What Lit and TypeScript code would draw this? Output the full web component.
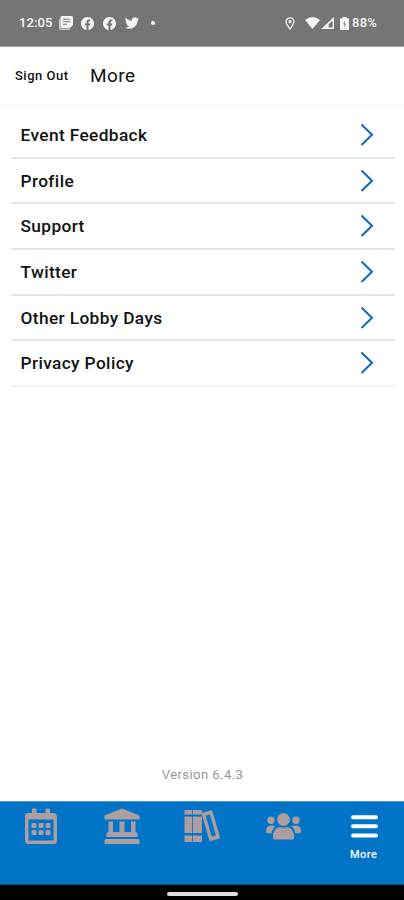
import { LitElement, html, css, svg } from "lit";
import { customElement } from "lit/decorators.js";

const chevron = html`<svg class="chevron" width="16" height="24" viewBox="0 0 16 24">
  <path d="M2.500 1.500 13 11.700 2.500 22" fill="none" stroke="currentColor" stroke-width="2" />
</svg>`;

const facebook = html`<svg width="13" height="13" viewBox="0 0 24 24">
  <path fill="currentColor" d="M24 12.07C24 5.4 18.63 0 12 0S0 5.4 0 12.07C0 18.1 4.39 23.1 10.13 24v-8.44H7.08v-3.49h3.05V9.41c0-3.02 1.79-4.69 4.53-4.69 1.31 0 2.68.24 2.68.24v2.97h-1.51c-1.49 0-1.95.93-1.95 1.88v2.26h3.32l-.53 3.49h-2.79V24C19.61 23.1 24 18.1 24 12.07z" />
</svg>`;

@customElement("status-bar")
class StatusBar extends LitElement {
  static styles = css`
    :host {
      display: flex;
      align-items: center;
      box-sizing: border-box;
      height: 47px;
      padding: 0 27px 0 19px;
      background: #757575;
      border-bottom: 1px solid #a5a5a5;
      color: #f5f5f5;
      font: 500 13px/16px Roboto, sans-serif;
    }
    svg { display: block; flex: none; }
    .time { width: 40px; letter-spacing: 0.1px; }
    .notes { display: flex; align-items: center; gap: 9px; }
    .notes svg:first-child { margin-right: -1px; }
    .dot { width: 4px; height: 4px; margin-left: 3px; border-radius: 50%; background: currentColor; }
    .system { display: flex; align-items: center; margin-left: auto; }
    .wifi { margin-left: 10px; }
    .signal { margin-left: 1px; }
    .battery { margin: 0 3px 0 6px; }
    .level { letter-spacing: 0.2px; }
  `;
  render() {
    return html`
      <span class="time">12:05</span>
      <div class="notes">
        <svg width="14" height="14" viewBox="0 0 14 14">
          <path fill="currentColor" opacity="0.65" d="M0 3h1.5v9.500H11V14H1.500A1.500 1.500 0 0 1 0 12.500z" />
          <path fill="currentColor" fill-rule="evenodd" d="M3 0h9.500a1.500 1.500 0 0 1 1.500 1.500V9l-3 3H3a1.500 1.500 0 0 1-1.500-1.500v-9A1.500 1.500 0 0 1 3 0zM4 2.700v1h7.500v-1zM4 5.200v1h7.500v-1zM4 7.700v1h4v-1z" />
        </svg>
        ${facebook} ${facebook}
        <svg width="14" height="12" viewBox="0 0 24 20">
          <path fill="currentColor" d="M23.950 2.570a10 10 0 0 1-2.820.770 4.960 4.960 0 0 0 2.160-2.720c-.950.550-2 .950-3.130 1.180a4.920 4.920 0 0 0-8.380 4.480C7.690 6.090 4.070 4.130 1.640 1.160a4.920 4.920 0 0 0 1.520 6.570 4.900 4.900 0 0 1-2.230-.620v.060a4.920 4.920 0 0 0 3.950 4.830 5 5 0 0 1-2.210.080 4.940 4.940 0 0 0 4.600 3.420A9.870 9.870 0 0 1 0 17.540a13.990 13.990 0 0 0 7.550 2.210c9.050 0 14-7.500 14-13.980l-.020-.630a9.940 9.940 0 0 0 2.420-2.570z" />
        </svg>
        <span class="dot"></span>
      </div>
      <div class="system">
        <svg width="10" height="13" viewBox="0 0 10 13">
          <path d="M5 12C3 9 1 7 1 4.800a4 4 0 0 1 8 0C9 7 7 9 5 12z" fill="none" stroke="currentColor" stroke-width="1.300" />
          <circle cx="5" cy="4.700" r="1.600" fill="currentColor" />
        </svg>
        <svg class="wifi" width="15" height="12" viewBox="0 0 15 12">
          <path fill="currentColor" d="M0 3Q7.500-2.800 15 3L7.500 12z" />
        </svg>
        <svg class="signal" width="13" height="12" viewBox="0 0 13 12">
          <path fill="currentColor" fill-rule="evenodd" d="M13 0v12H0zM11.600 3.500 7.700 7.200v3.400h3.900z" />
        </svg>
        <svg class="battery" width="9" height="13" viewBox="0 0 9 13">
          <path fill="currentColor" d="M2.500 0h4v1.200H8q1 0 1 1V12q0 1-1 1H1q-1 0-1-1V2.200q0-1 1-1h1.500z" />
          <path fill="#757575" d="M4.800 3.500 3.200 7.200h1.200V10.500l1.600-3.800H4.800z" />
        </svg>
        <span class="level">88%</span>
      </div>
    `;
  }
}

@customElement("tab-bar")
class TabBar extends LitElement {
  static styles = css`
    :host {
      display: grid;
      grid-template-columns: repeat(5, 1fr);
      box-sizing: border-box;
      height: 84px;
      padding: 6px 0 0 1px;
      background: #0274c8;
      border-top: 1px solid #4c9bd6;
      border-bottom: 1px solid #04508a;
      color: #ac9da0;
    }
    .tab { display: flex; flex-direction: column; align-items: center; }
    .active { color: #fff; font: 500 11px/14px Roboto, sans-serif; letter-spacing: 0.5px; }
    .active svg { margin-bottom: 3px; }
    svg { display: block; }
  `;
  render() {
    const cells = [0, 1, 2].flatMap((column) => [0, 1].map((row) => [6.500 + column * 7, 15 + row * 7]));
    return html`
      <div class="tab">
        <svg width="32" height="38" viewBox="0 0 32 38">
          <path fill="currentColor" fill-rule="evenodd" d="M7 1.500q0-1 1-1h2.500q1 0 1 1V5h9V1.500q0-1 1-1H24q1 0 1 1V5h3.500Q32 5 32 8.500v24Q32 36 28.500 36h-25Q0 36 0 32.500v-24Q0 5 3.500 5H7zM3.500 11.500v21h25v-21z" />
          ${cells.map(([x, y]) => svg`<rect x=${x} y=${y} width="5" height="5" rx="0.8" fill="currentColor" />`)}
        </svg>
      </div>
      <div class="tab">
        <svg width="36" height="38" viewBox="0 0 36 38">
          <path fill="currentColor" d="M18 0.500 35.500 7.500V11.500H.5V7.500zM4.500 13.500H9v10.500h6.500V13.500h5V24H27V13.500h4.500V24q2 0 2 2V29H2.500v-3q0-2 2-2zM.5 36v-3.500q0-1.500 1.500-1.500h32q1.500 0 1.500 1.500V36z" />
        </svg>
      </div>
      <div class="tab">
        <svg width="36" height="38" viewBox="0 0 36 38">
          <path fill="currentColor" d="M1.500 2h6.700v4.500H.5V3q0-1 1-1zM9 2h8q1 0 1 1v3.500H9zM.5 8.500h7.700V25H.5zM9 8.500h9V25H9zM.5 27.500h7.700V34H1.500q-1 0-1-1zM9 27.500h9V33q0 1-1 1H9z" />
          <g transform="translate(17.500 5) rotate(-16)">
            <path fill="currentColor" fill-rule="evenodd" d="M1 0h9q1 0 1 1v27.500q0 1-1 1H1q-1 0-1-1V1q0-1 1-1zM3.300 3.800v21.700h4.400V3.800z" />
          </g>
        </svg>
      </div>
      <div class="tab">
        <svg width="36" height="38" viewBox="0 0 36 38">
          <g fill="currentColor" transform="translate(.5 0)">
            <circle cx="18" cy="11.500" r="6.400" />
            <circle cx="5.500" cy="12.300" r="3.700" />
            <circle cx="30.500" cy="12.300" r="3.700" />
            <path d="M7.500 30q-.500-10 7-11 3.500 1.200 7 0 7.500 1 7 11-.500 1.500-1.500 1.500H9q-1 0-1.500-1.500zM.500 23.500q0-6 4.500-6 3 0 5 .800-3 2-3.800 7H2q-1.500 0-1.500-1.800zM35.500 23.500q0-6-4.500-6-3 0-5 .800 3 2 3.800 7H34q1.500 0 1.500-1.800z" />
          </g>
        </svg>
      </div>
      <div class="tab active">
        <svg width="28" height="37" viewBox="0 0 28 37">
          <path d="M3 9.200h23M3 18.300h23M3 27.500h23" stroke="currentColor" stroke-width="4" stroke-linecap="round" />
        </svg>
        More
      </div>
    `;
  }
}

@customElement("app-root")
class AppRoot extends LitElement {
  static styles = css`
    :host {
      display: flex;
      flex-direction: column;
      height: 900px;
      background: #fff;
      color: #111;
      font-family: Roboto, sans-serif;
    }
    header {
      display: flex;
      align-items: center;
      box-sizing: border-box;
      height: 58px;
      padding-left: 15px;
      border-bottom: 1px solid #fbfbfb;
    }
    .sign-out { width: 75px; font: 500 13px/20px Roboto, sans-serif; letter-spacing: 0.500px; }
    h1 { margin: 0; font: 400 19px/24px Roboto, sans-serif; letter-spacing: 0.400px; }
    .list { flex: 1; margin: 8px 9px 0 10.500px; }
    .row {
      display: flex;
      align-items: center;
      justify-content: space-between;
      box-sizing: border-box;
      height: 45.700px;
      padding: 0 20px 0 10px;
      border-bottom: 2px solid #e5e5e5;
      font-size: 17.300px;
      font-weight: 500;
      letter-spacing: 0.380px;
    }
    .row:last-child { border-color: #f2f2f2; }
    .chevron { color: #1268bd; }
    .version { margin-bottom: 16px; padding-left: 1px; text-align: center; font-size: 13px; line-height: 20px; letter-spacing: 0.450px; color: #92979d; }
    .nav { display: flex; justify-content: center; box-sizing: border-box; height: 15px; padding-top: 6.500px; background: #000; }
    .handle { width: 71px; height: 4px; border-radius: 2px; background: #dedede; }
  `;
  render() {
    const items = ["Event Feedback", "Profile", "Support", "Twitter", "Other Lobby Days", "Privacy Policy"];
    return html`
      <status-bar></status-bar>
      <header><span class="sign-out">Sign Out</span><h1>More</h1></header>
      <div class="list">${items.map((label) => html`<div class="row"><span>${label}</span>${chevron}</div>`)}</div>
      <div class="version">Version 6.4.3</div>
      <tab-bar></tab-bar>
      <div class="nav"><div class="handle"></div></div>
    `;
  }
}
